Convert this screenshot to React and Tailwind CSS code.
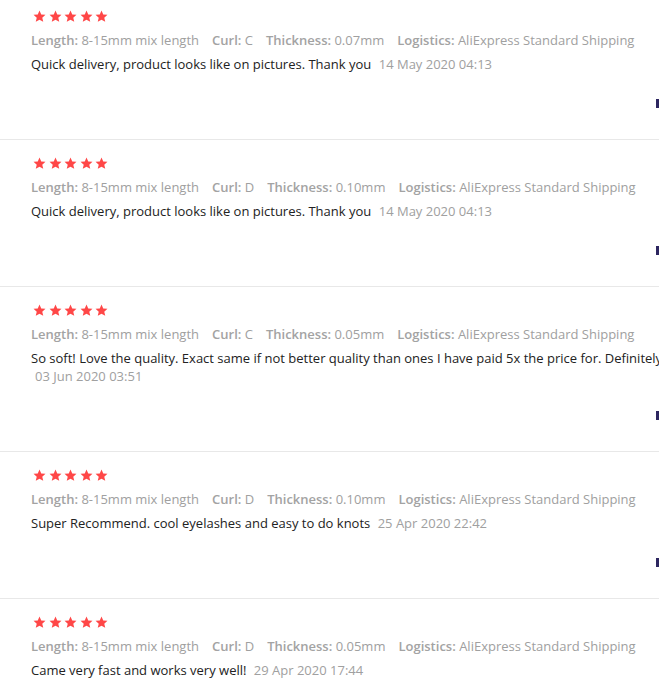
const reviews = [
  {
    curl: 'C',
    thickness: '0.07mm',
    text: 'Quick delivery, product looks like on pictures. Thank you',
    date: '14 May 2020 04:13',
  },
  {
    curl: 'D',
    thickness: '0.10mm',
    text: 'Quick delivery, product looks like on pictures. Thank you',
    date: '14 May 2020 04:13',
  },
  {
    curl: 'C',
    thickness: '0.05mm',
    text: 'So soft! Love the quality. Exact same if not better quality than ones I have paid 5x the price for. Definitely recommend!',
    date: '03 Jun 2020 03:51',
  },
  {
    curl: 'D',
    thickness: '0.10mm',
    text: 'Super Recommend. cool eyelashes and easy to do knots',
    date: '25 Apr 2020 22:42',
  },
  {
    curl: 'D',
    thickness: '0.05mm',
    text: 'Came very fast and works very well!',
    date: '29 Apr 2020 17:44',
  },
];

const Star = () => (
  <svg viewBox="0 0 24 24" className="h-[13px] w-[13px]" fill="#ff4747">
    <path d="M12 1l3.2 7.2 7.8.7-5.9 5.2 1.8 7.7L12 17.8l-6.9 4 1.8-7.7L1 8.9l7.8-.7z" />
  </svg>
);

const Meta = ({ label, value }) => (
  <span className="mr-[13px] whitespace-nowrap">
    <span className="font-semibold text-[#a3a3a3]">{label}:</span> <span className="text-[#a0a0a0]">{value}</span>
  </span>
);

const Review = ({ review }) => (
  <div className="border-t border-[#e8e8e8] pb-[26px] pl-[31px] pr-[20px] pt-[16px]">
    <div className="ml-[2px] flex h-[14px] items-center gap-[2.5px]">
      {[0, 1, 2, 3, 4].map((i) => (
        <Star key={i} />
      ))}
    </div>
    <div className="mt-[7px] text-[13px] leading-[20px]">
      <Meta label="Length" value="8-15mm mix length" />
      <Meta label="Curl" value={review.curl} />
      <Meta label="Thickness" value={review.thickness} />
      <Meta label="Logistics" value="AliExpress Standard Shipping" />
    </div>
    <p className="mt-[5px] text-[13px] leading-[18px] text-[#222]">
      {review.text} <span className="ml-[4px] whitespace-nowrap text-[#a0a0a0]">{review.date}</span>
    </p>
    <div className="mt-[20px] flex h-[20px] justify-end">
      <div className="flex w-[124px] items-center">
        <span className="h-[9px] w-[3px] bg-[#2d2660]" />
      </div>
    </div>
  </div>
);

export default function App() {
  return (
    <div
      className="h-[686px] w-[659px] overflow-hidden bg-white"
      style={{ fontFamily: '"Open Sans", "Liberation Sans", sans-serif' }}
    >
      <div className="-mt-[8px] w-[800px]">
        {reviews.map((r, i) => (
          <Review key={i} review={r} />
        ))}
      </div>
    </div>
  );
}
